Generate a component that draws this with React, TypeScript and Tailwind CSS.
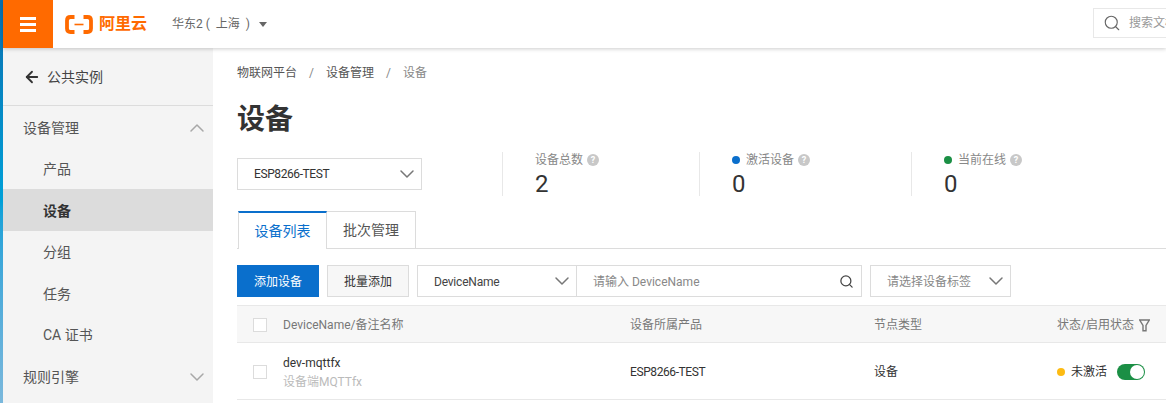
import { ChevronDown, ChevronUp, ArrowLeft, Search } from "lucide-react";

const FONT = "font-['Roboto','Noto_Sans_CJK_SC',sans-serif]";

function Header() {
  return (
    <header className="relative z-10 flex h-12 shrink-0 items-center bg-white shadow-[0_1px_4px_rgba(0,0,0,0.2)]">
      <div className="flex h-12 w-[50px] shrink-0 flex-col items-center justify-center gap-[3px] bg-[#ff6a00]">
        <span className="h-[3px] w-4 bg-white" />
        <span className="h-[3px] w-4 bg-white" />
        <span className="h-[3px] w-4 bg-white" />
      </div>
      <div className="ml-3 flex items-center gap-[6px]">
        <svg width="28" height="19" viewBox="0 0 28 19" fill="none">
          <path d="M9.5 2H5.5C3.3 2 2 3.3 2 5.5V13.5C2 15.7 3.3 17 5.5 17H9.5" stroke="#ff6a00" strokeWidth="3.8" />
          <path d="M18.5 2H22.5C24.7 2 26 3.3 26 5.5V13.5C26 15.7 24.7 17 22.5 17H18.5" stroke="#ff6a00" strokeWidth="3.8" />
          <path d="M9.5 9.5H18.5" stroke="#ff6a00" strokeWidth="1.6" />
        </svg>
        <span className="text-[16px] leading-none font-bold text-[#ff6a00]">阿里云</span>
      </div>
      <div className="ml-[25px] flex items-center text-xs text-[#666]">
        <span className="whitespace-pre">华东2 (  上海  )</span>
        <span className="ml-[9px] h-0 w-0 border-x-[4px] border-t-[5px] border-x-transparent border-t-[#666]" />
      </div>
      <div className="ml-auto -mt-[2px] flex h-[30px] w-[73px] items-center overflow-hidden border border-r-0 border-[#e8e8e8] pl-[9px]">
        <Search className="size-[18px] shrink-0 text-[#666]" strokeWidth={1.5} />
        <span className="ml-[8px] text-xs whitespace-nowrap text-[#999]">搜索文档</span>
      </div>
    </header>
  );
}

function SideItem({ label, active }: { label: string; active?: boolean }) {
  return (
    <div
      className={`flex h-[42px] items-center pl-10 text-sm ${
        active ? "bg-[#dcdcdc] pt-px font-bold text-[#333]" : "text-[#555]"
      }`}
    >
      {label}
    </div>
  );
}

function Sidebar() {
  return (
    <aside className="w-[210px] shrink-0 bg-[#f4f4f4]">
      <div className="flex h-[58px] items-center border-b border-[#dcdcdc] pt-[1px] pl-[20px] text-sm text-[#444]">
        <ArrowLeft className="size-[18px] text-[#333]" strokeWidth={2.4} />
        <span className="ml-[6px]">公共实例</span>
      </div>
      <div className="flex h-[41px] items-center justify-between pt-[3px] pr-1 pl-5 text-sm text-[#555]">
        设备管理
        <ChevronUp className="size-6 text-[#a8a8a8]" strokeWidth={1.5} />
      </div>
      <div className="flex h-[42px] items-center pt-[2px] pl-10 text-sm text-[#555]">产品</div>
      <SideItem label="设备" active />
      <SideItem label="分组" />
      <SideItem label="任务" />
      <div className="flex h-[42px] items-center pb-[2px] pl-10 text-sm text-[#555]">CA 证书</div>
      <div className="flex h-[41px] items-center justify-between pb-[1px] pr-1 pl-5 text-sm text-[#555]">
        规则引擎
        <ChevronDown className="size-6 text-[#a8a8a8]" strokeWidth={1.5} />
      </div>
    </aside>
  );
}

function Stat({ label, value, dot, width }: { label: string; value: string; dot?: string; width: string }) {
  return (
    <div className={`h-11 border-l border-[#e8e8e8] pl-8 ${width}`}>
      <div className="flex h-[16px] items-center text-xs leading-none text-[#888]">
        {dot && <span className={`mr-[6px] size-2 rounded-full ${dot}`} />}
        {label}
        <span className="ml-1 flex size-3 items-center justify-center rounded-full bg-[#c8c8c8] text-[9px] leading-none font-bold text-white">
          ?
        </span>
      </div>
      <div className="mt-[3px] text-[24px] leading-[26px] text-[#333]">{value}</div>
    </div>
  );
}

function Main() {
  return (
    <main className="w-[953px] shrink-0 pt-[17px] pl-6">
      <nav className="flex h-[16px] items-center text-xs text-[#555]">
        物联网平台
        <span className="mx-[12px] text-[#888]">/</span>
        设备管理
        <span className="mx-[12px] text-[#888]">/</span>
        <span className="text-[#888]">设备</span>
      </nav>

      <h1 className="mt-[19px] text-[28px] leading-[40px] font-bold text-[#333]">设备</h1>

      <div className="mt-[12px] flex items-start">
        <div className="mt-[6px] flex h-8 w-[185px] items-center justify-between border border-[#dcdcdc] pr-[2px] pl-4 text-xs text-[#333]">
          <span className="tracking-[-0.4px]">ESP8266-TEST</span>
          <ChevronDown className="size-6 text-[#777]" strokeWidth={1.5} />
        </div>
        <div className="ml-20 flex">
          <Stat label="设备总数" value="2" width="w-[197px]" />
          <Stat label="激活设备" value="0" dot="bg-[#0a6fcc]" width="w-[212px]" />
          <Stat label="当前在线" value="0" dot="bg-[#1b8f45]" width="w-[200px]" />
        </div>
      </div>

      <div className="mt-[15px] flex h-[38px] border-b border-[#dcdcdc] pl-px text-sm">
        <div className="z-10 flex h-[38px] w-[89px] items-center justify-center border-x border-t-2 border-x-[#dcdcdc] border-t-[#0a6fcc] bg-white text-[#0a6fcc]">
          设备列表
        </div>
        <div className="flex h-[37px] w-[89px] items-center justify-center border-t border-r border-[#dcdcdc] text-[#555]">
          批次管理
        </div>
      </div>

      <div className="mt-4 flex h-8 items-stretch text-xs">
        <div className="flex w-[82px] items-center justify-center bg-[#0a6fcc] pt-[2px] text-white">添加设备</div>
        <div className="ml-[8px] flex w-[82px] items-center justify-center border border-[#dcdcdc] bg-[#f7f7f7] pt-[2px] text-[#333]">
          批量添加
        </div>
        <div className="ml-[8px] flex w-[160px] items-center justify-between border border-[#dcdcdc] pr-[2px] pl-4 text-[#444]">
          <span className="pt-[2px] tracking-[-0.2px]">DeviceName</span>
          <ChevronDown className="size-6 text-[#777]" strokeWidth={1.5} />
        </div>
        <div className="flex w-[285px] items-center justify-between border-y border-r border-[#dcdcdc] pr-[7px] pl-4 text-[#888]">
          <span className="pt-[2px]">请输入 DeviceName</span>
          <Search className="size-[15px] text-[#444]" strokeWidth={2} />
        </div>
        <div className="ml-[8px] flex w-[141px] items-center justify-between border border-[#dcdcdc] pr-[2px] pl-4 text-[#888]">
          <span className="pt-[2px]">请选择设备标签</span>
          <ChevronDown className="size-6 text-[#777]" strokeWidth={1.5} />
        </div>
      </div>

      <div className="mt-2 flex h-[38px] items-center border-y border-[#e8e8e8] bg-[#f7f7f7] pt-[2px] pl-4 text-xs text-[#777]">
        <span className="size-[14px] shrink-0 border border-[#dcdcdc] bg-white" />
        <span className="ml-4 w-[347px]">DeviceName/备注名称</span>
        <span className="w-[244px]">设备所属产品</span>
        <span className="w-[183px]">节点类型</span>
        <span className="flex items-center whitespace-nowrap">
          状态/启用状态
          <svg className="ml-[5px]" width="11" height="13" viewBox="0 0 11 13" fill="none">
            <path d="M0.7 1H10.3L7 6.5V11.8H4V6.5Z" stroke="#777" strokeWidth="1.4" />
          </svg>
        </span>
      </div>

      <div className="flex h-[57px] items-center border-b border-[#e8e8e8] pt-[2px] pl-4 text-xs text-[#333]">
        <span className="size-[14px] shrink-0 border border-[#dcdcdc] bg-white" />
        <div className="ml-4 w-[347px]">
          <div className="leading-4">dev-mqttfx</div>
          <div className="mt-[3px] leading-4 text-[#bbb]">设备端MQTTfx</div>
        </div>
        <span className="w-[244px] tracking-[-0.4px]">ESP8266-TEST</span>
        <span className="w-[183px]">设备</span>
        <span className="flex items-center whitespace-nowrap">
          <span className="mr-[6px] size-2 rounded-full bg-[#fdbb13]" />
          未激活
          <span className="ml-[10px] flex h-4 w-[28px] items-center justify-end rounded-full bg-[#1b8f45] pr-px">
            <span className="size-[14px] rounded-full bg-white" />
          </span>
        </span>
      </div>
    </main>
  );
}

export default function App() {
  return (
    <div className={`flex h-[403px] w-[1166px] overflow-hidden bg-white ${FONT}`}>
      <div className="w-[3px] shrink-0 bg-gradient-to-b from-[#0a70b0] via-[#00a0d8] to-[#7ab8dc]" />
      <div className="flex w-[1163px] flex-col">
        <Header />
        <div className="flex min-h-0 flex-1">
          <Sidebar />
          <Main />
        </div>
      </div>
    </div>
  );
}
